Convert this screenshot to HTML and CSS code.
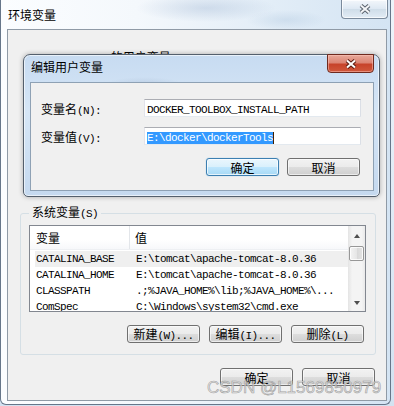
FILE: index.html
```html
<!DOCTYPE html>
<html>
<head>
    <meta charset="utf-8">
    <title>环境变量</title>
    <link rel="stylesheet" href="styles.css">
</head>
<body>
    <div class="win">
        <!-- outer window title bar -->
        <div class="titlebar">
            <span class="title">环境变量</span>
            <span class="close">
                <svg width="12" height="10" viewBox="0 0 12 10">
                    <path d="M2 1.5 L10 8.5 M10 1.5 L2 8.5" stroke="#59626d" stroke-width="4"></path>
                    <path d="M2 1.5 L10 8.5 M10 1.5 L2 8.5" stroke="#f4f6f8" stroke-width="2"></path>
                </svg>
            </span>
        </div>
        <div class="client">
            <!-- user variables, hidden under the edit dialog -->
            <div class="user-section">
                <span class="group-label"><span class="m">Administrator</span> 的用户变量<span class="m">(U)</span></span>
            </div>
            <!-- system variables -->
            <fieldset class="group">
                <legend>系统变量<span class="m">(S)</span></legend>
                <div class="listview">
                    <div class="list-main">
                        <div class="list-header">
                            <span class="col-name">变量</span>
                            <span class="col-value">值</span>
                        </div>
                        <div class="list-body">
                            <div class="list-row hot">
                                <span class="cell-name m">CATALINA_BASE</span>
                                <span class="cell-value m">E:\tomcat\apache-tomcat-8.0.36</span>
                            </div>
                            <div class="list-row">
                                <span class="cell-name m">CATALINA_HOME</span>
                                <span class="cell-value m">E:\tomcat\apache-tomcat-8.0.36</span>
                            </div>
                            <div class="list-row">
                                <span class="cell-name m">CLASSPATH</span>
                                <span class="cell-value m">.;%JAVA_HOME%\lib;%JAVA_HOME%\...</span>
                            </div>
                            <div class="list-row">
                                <span class="cell-name m">ComSpec</span>
                                <span class="cell-value m">C:\Windows\system32\cmd.exe</span>
                            </div>
                        </div>
                    </div>
                    <div class="vscroll">
                        <div class="sb-btn"><span class="arrow-up"></span></div>
                        <div class="sb-thumb"></div>
                        <div class="sb-btn sb-down"><span class="arrow-down"></span></div>
                    </div>
                </div>
                <div class="group-buttons">
                    <button class="btn">新建<span class="m">(W)...</span></button>
                    <button class="btn">编辑<span class="m">(I)...</span></button>
                    <button class="btn">删除<span class="m">(L)</span></button>
                </div>
            </fieldset>
            <div class="dialog-buttons">
                <button class="btn">确定</button>
                <button class="btn">取消</button>
            </div>
        </div>

        <!-- edit user variable dialog, on top -->
        <div class="edit-dialog">
            <div class="titlebar dlg-titlebar">
                <span class="title">编辑用户变量</span>
                <span class="close close-red">
                    <svg width="12" height="10" viewBox="0 0 12 10">
                        <path d="M2 1.5 L10 8.5 M10 1.5 L2 8.5" stroke="#5a1a10" stroke-width="4"></path>
                        <path d="M2 1.5 L10 8.5 M10 1.5 L2 8.5" stroke="#ffffff" stroke-width="2"></path>
                    </svg>
                </span>
            </div>
            <div class="dlg-client">
                <div class="field-row">
                    <span class="field-label">变量名<span class="m">(N):</span></span>
                    <div class="textbox"><span class="m">DOCKER_TOOLBOX_INSTALL_PATH</span></div>
                </div>
                <div class="field-row second">
                    <span class="field-label">变量值<span class="m">(V):</span></span>
                    <div class="textbox"><span class="m selected">E:\docker\dockerTools</span></div>
                </div>
                <div class="dlg-buttons">
                    <button class="btn default">确定</button>
                    <button class="btn">取消</button>
                </div>
            </div>
        </div>

        <div class="watermark">CSDN @L1569850979</div>
    </div>
</body>
</html>
```

FILE: styles.css
```css
* {
    box-sizing: border-box;
}
body {
    margin: 0;
    width: 394px;
    height: 406px;
    overflow: hidden;
    background: linear-gradient(to bottom, #eef4fa, #d3e2f1);
    font-family: "Noto Sans CJK SC", sans-serif;
    font-size: 12px;
    color: #000000;
}
.m {
    font-family: "Liberation Mono", monospace;
    font-size: 11px;
    letter-spacing: -0.6px;
}

/* outer window */
.win {
    position: relative;
    width: 391px;
    height: 405px;
    border: 1px solid #66768a;
    border-top: none;
    border-radius: 0 0 6px 6px;
    background:
        radial-gradient(ellipse 70px 14px at 205px 8px, rgba(120, 150, 190, 0.25), transparent),
        radial-gradient(ellipse 40px 10px at 285px 20px, rgba(150, 180, 210, 0.25), transparent),
        linear-gradient(to right, #fbfdff 0%, #f4f8fc 35%, #e2edf7 70%, #d4e4f3 100%);
}
.titlebar {
    display: flex;
    justify-content: space-between;
    align-items: flex-start;
    height: 29px;
}
.title {
    padding: 6px 0 0 7px;
    line-height: 18px;
}
.close {
    display: flex;
    align-items: center;
    justify-content: center;
    width: 47px;
    height: 19px;
    margin-right: 2px;
    border: 1px solid #7a8a9c;
    border-top: none;
    border-radius: 0 0 4px 4px;
    background: linear-gradient(to bottom, #f3f7fb, #dde8f3 50%, #cfdde9 51%, #e2ecf5);
    box-shadow: inset 0 0 0 1px rgba(255, 255, 255, 0.7);
}
.client {
    width: 380px;
    height: 372px;
    margin-left: 6px;
    border: 1px solid #8f9aa6;
    background: #f0f0f0;
}
.user-section {
    height: 175px;
    padding: 20px 0 0 22px;
    line-height: 14px;
}

/* system variables group */
.group {
    width: 356px;
    margin: 0 0 0 12px;
    padding: 4px 9px 11px 8px;
    border: 1px solid #d5dfe5;
    border-radius: 3px;
    min-width: 0;
}
.group legend {
    padding: 0 3px;
    line-height: 14px;
}
.listview {
    display: flex;
    width: 337px;
    height: 87px;
    border: 1px solid #828790;
    background: #ffffff;
}
.list-main {
    flex: 1;
    overflow: hidden;
}
.list-header {
    display: flex;
    height: 24px;
    line-height: 24px;
    background: linear-gradient(to bottom, #ffffff, #ffffff 60%, #f7f8fa);
    border-bottom: 1px solid #eef0f3;
}
.col-name {
    width: 100px;
    padding-left: 6px;
    border-right: 1px solid #e3e6ea;
}
.col-value {
    padding-left: 5px;
}
.list-body {
    padding-top: 1px;
}
.list-row {
    display: flex;
    height: 16px;
    line-height: 16px;
    margin-left: 5px;
    white-space: nowrap;
}
.list-row.hot {
    background: #efefef;
}
.cell-name {
    width: 101px;
    padding-left: 1px;
}
.vscroll {
    display: flex;
    flex-direction: column;
    width: 17px;
    background: linear-gradient(to right, #e4e4e4, #f4f4f4 25%, #f4f4f4 80%, #e9e9e9);
}
.sb-btn {
    display: flex;
    align-items: center;
    justify-content: center;
    height: 20px;
}
.sb-down {
    margin-top: auto;
    height: 17px;
}
.arrow-up {
    border-left: 3.5px solid transparent;
    border-right: 3.5px solid transparent;
    border-bottom: 4px solid #4f4f4f;
}
.arrow-down {
    border-left: 3.5px solid transparent;
    border-right: 3.5px solid transparent;
    border-top: 4px solid #4f4f4f;
}
.sb-thumb {
    height: 15px;
    margin: 0 1px;
    border: 1px solid #979797;
    border-radius: 2px;
    background: linear-gradient(to right, #f4f4f4, #e6e6e6 50%, #d8d8d8 51%, #e4e4e4);
    box-shadow: inset 0 0 0 1px rgba(255, 255, 255, 0.8);
}
.group-buttons {
    display: flex;
    justify-content: flex-end;
    gap: 9px;
    margin-top: 13px;
    padding-right: 2px;
}
.dialog-buttons {
    display: flex;
    justify-content: flex-end;
    gap: 9px;
    margin-top: 13px;
    padding-right: 11px;
}

/* buttons */
.btn {
    width: 73px;
    height: 18px;
    padding: 0;
    border: 1px solid #707070;
    border-radius: 3px;
    background: linear-gradient(to bottom, #f2f2f2 0%, #ebebeb 50%, #dddddd 51%, #cfcfcf 100%);
    box-shadow: inset 0 0 0 1px rgba(255, 255, 255, 0.6);
    font-family: "Noto Sans CJK SC", sans-serif;
    font-size: 12px;
    line-height: 15px;
    color: #000000;
    white-space: nowrap;
}
.btn.default {
    border-color: #3c7fb1;
    background: linear-gradient(to bottom, #eaf6fd 0%, #d9f0fc 50%, #bee6fd 51%, #a7d9f5 100%);
    box-shadow: inset 0 0 0 1px rgba(255, 255, 255, 0.7), 0 0 1px #64b5e6;
}

/* edit dialog */
.edit-dialog {
    position: absolute;
    left: 22px;
    top: 54px;
    width: 357px;
    height: 143px;
    border: 1px solid #545f6c;
    border-radius: 7px 7px 5px 5px;
    background:
        radial-gradient(ellipse 30px 8px at 40px 34px, rgba(110, 130, 160, 0.35), transparent),
        radial-gradient(ellipse 40px 8px at 120px 30px, rgba(130, 150, 180, 0.25), transparent),
        linear-gradient(to bottom, #c7dbf1, #d6e6f6 40%, #c5d9ef);
    box-shadow: inset 0 0 0 1px rgba(255, 255, 255, 0.6), 0 0 5px rgba(0, 0, 0, 0.3);
}
.dlg-titlebar {
    height: 27px;
}
.dlg-titlebar .title {
    padding: 3px 0 0 7px;
}
.close-red {
    margin-top: -1px;
    margin-right: 5px;
    border-color: #6e2a1e;
    border-top: 1px solid #6e2a1e;
    background: linear-gradient(to bottom, #e8a899 0%, #dc8574 45%, #c7432a 55%, #d0583c 100%);
    box-shadow: inset 0 0 0 1px rgba(255, 200, 190, 0.5);
}
.dlg-client {
    width: 344px;
    height: 109px;
    margin-left: 6px;
    border: 1px solid #8ea1b4;
    background: #f0f0f0;
}
.field-row {
    display: flex;
    align-items: center;
    height: 18px;
    margin-top: 16px;
}
.field-row.second {
    margin-top: 10px;
}
.field-label {
    width: 113px;
    padding-left: 10px;
}
.textbox {
    width: 217px;
    height: 18px;
    padding-left: 2px;
    line-height: 16px;
    border: 1px solid;
    border-color: #abadb3 #dbdfe6 #e3e9ef #e2e3ea;
    background: #ffffff;
    white-space: nowrap;
}
.selected {
    background: #3399ff;
    color: #ffffff;
    border-right: 1px solid #402000;
}
.dlg-buttons {
    display: flex;
    justify-content: flex-end;
    gap: 8px;
    margin-top: 13px;
    padding-right: 13px;
}

/* csdn watermark */
.watermark {
    position: absolute;
    left: 206px;
    top: 378px;
    font-family: "Liberation Sans", Arial, sans-serif;
    font-size: 17px;
    line-height: 20px;
    color: rgba(225, 225, 225, 0.75);
    -webkit-text-stroke: 0.6px rgba(135, 135, 135, 0.75);
    white-space: nowrap;
}
```
